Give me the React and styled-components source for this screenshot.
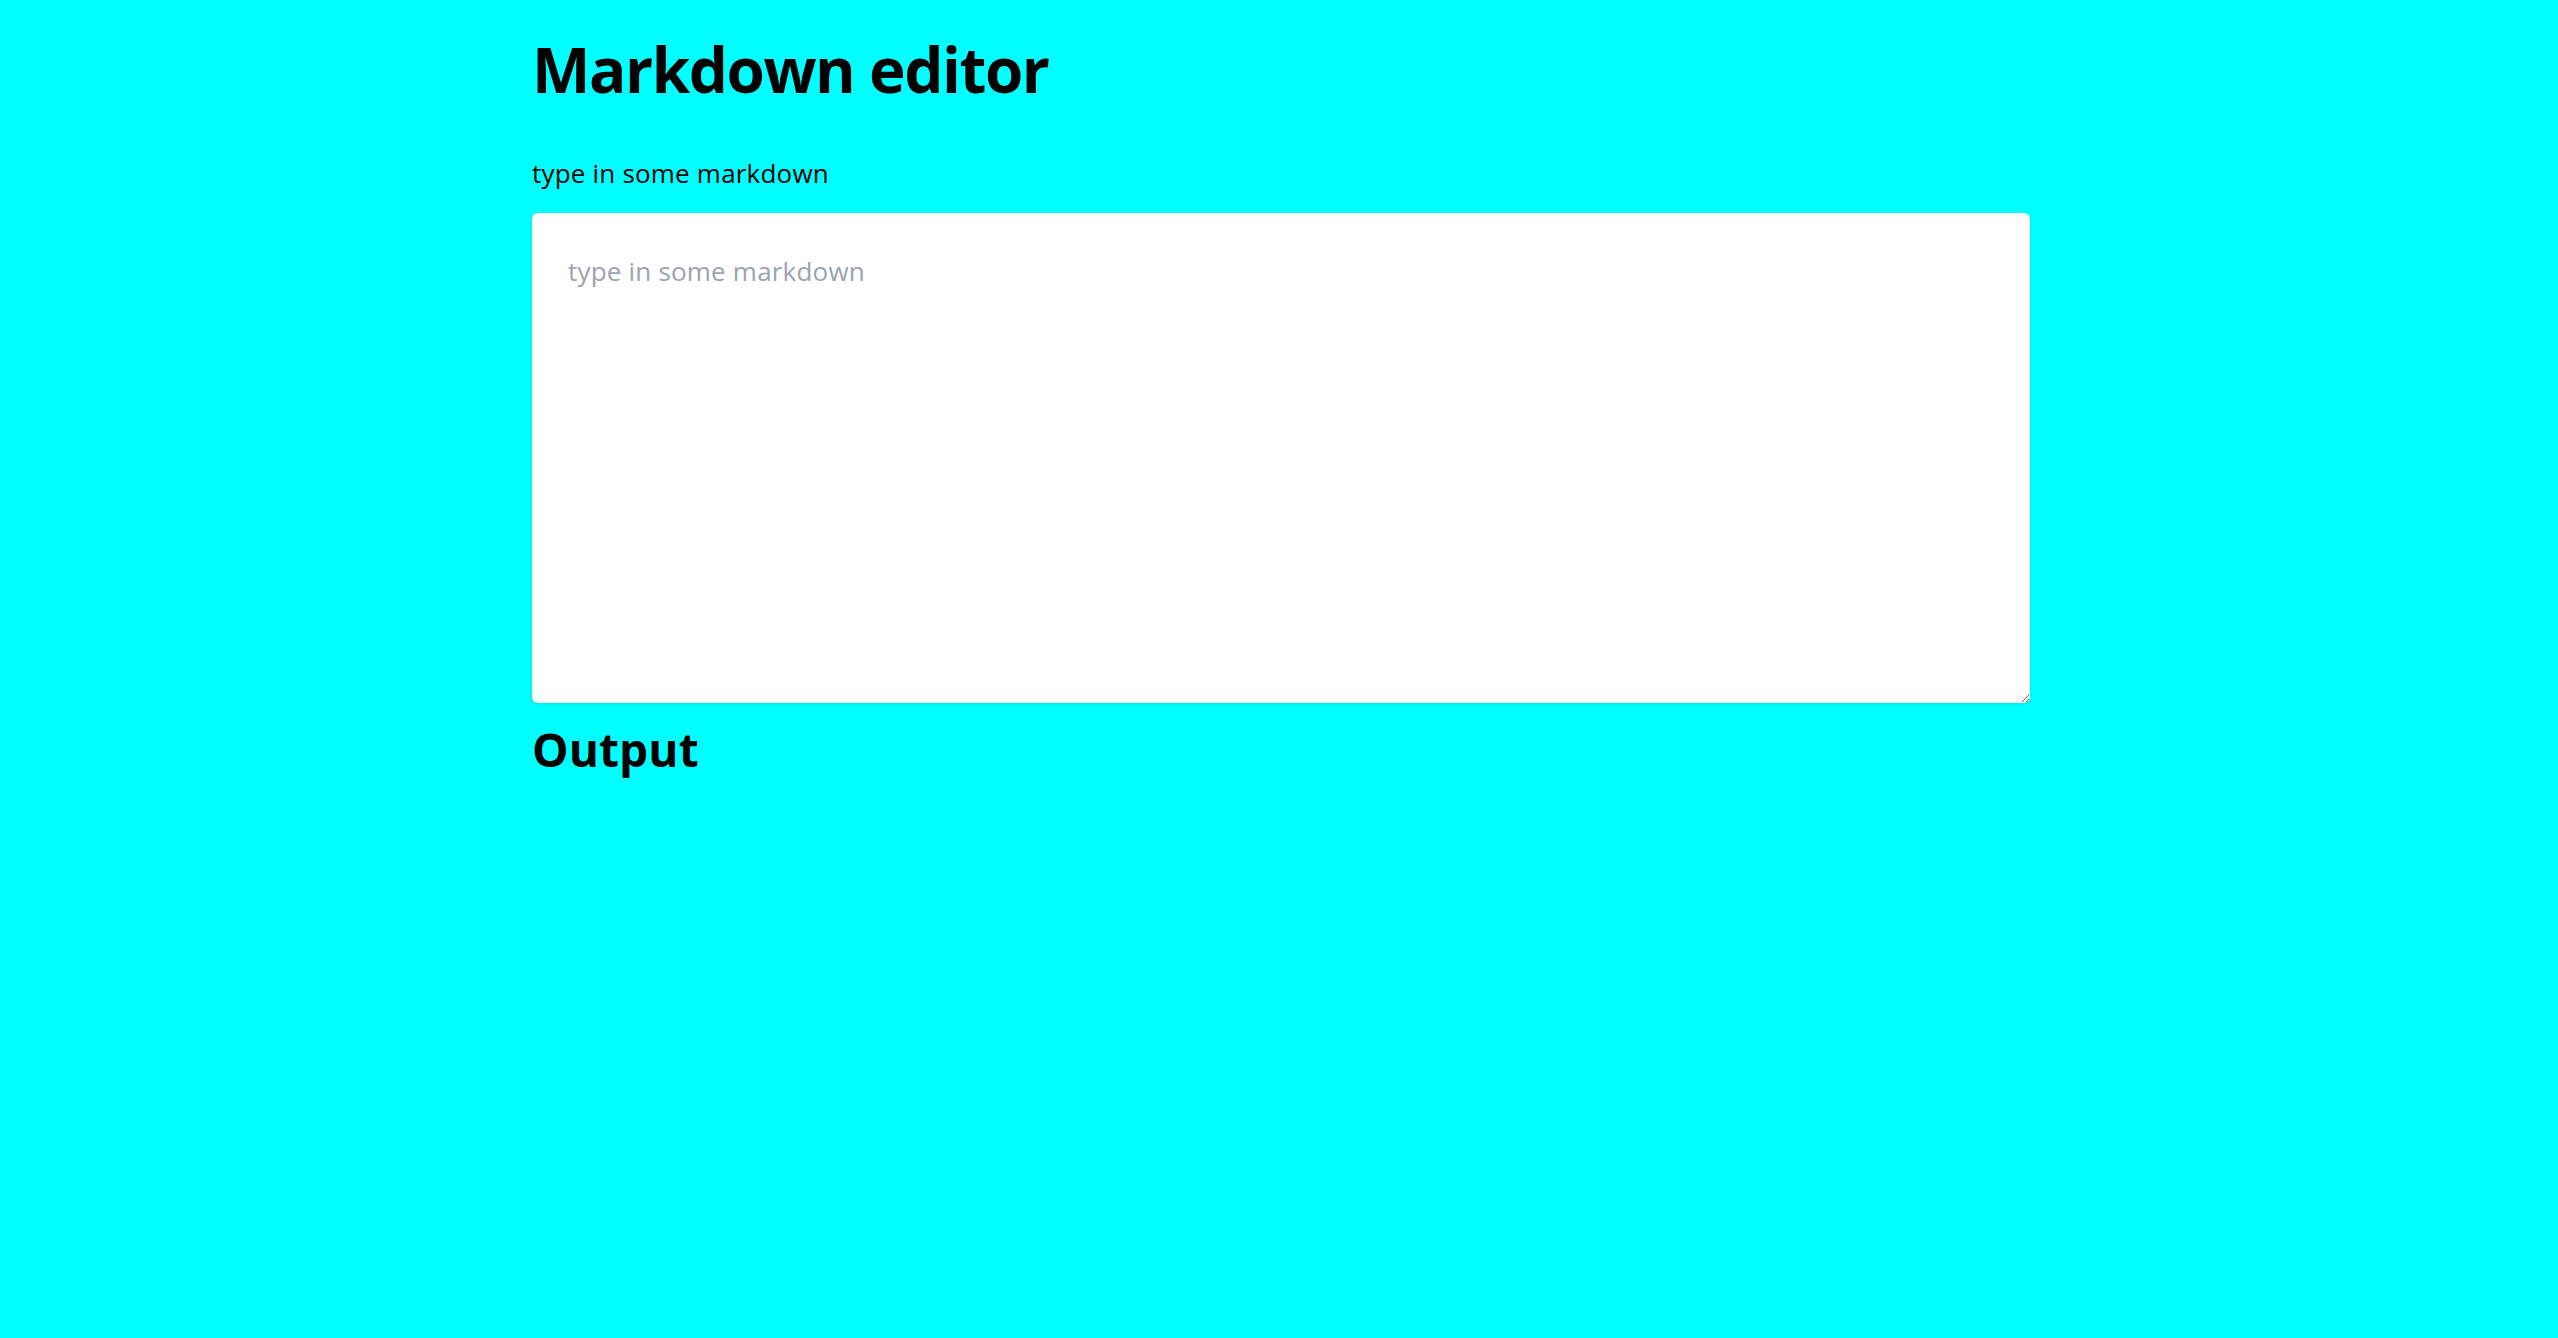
import styled, { createGlobalStyle } from "styled-components";

const GlobalStyle = createGlobalStyle`
    html, body {
        margin: 0;
        padding: 0;
        background: #00ffff;
        font-family: "Open Sans", "Noto Sans", sans-serif;
        color: #000;
    }
`

const Page = styled.div`
    min-height: 100vh;
    background: #00ffff;
    box-sizing: border-box;
    padding: 29px 0 0 4px;
`

const Main = styled.main`
    width: 1498px;
    margin: 0 auto;
    display: flex;
    flex-direction: column;
`

const Title = styled.h1`
    margin: 0;
    font-size: 62px;
    font-weight: 700;
    line-height: 80px;
    letter-spacing: -1.45px;
`

const Label = styled.label`
    margin-top: 44px;
    font-size: 26px;
    line-height: 40px;
    letter-spacing: 0.2px;
`

const Editor = styled.textarea`
    margin-top: 20px;
    height: 490px;
    box-sizing: border-box;
    padding: 38px 36px 32px;
    border: none;
    border-radius: 6px;
    background: #fff;
    box-shadow: 0 1px 3px rgba(0, 0, 0, 0.12);
    font-family: "Open Sans", "Noto Sans", sans-serif;
    font-size: 26px;
    line-height: 40px;
    letter-spacing: 0.2px;
    color: #111;
    outline: none;
    &::placeholder {
        color: #9ca3af;
    }
`

const Heading = styled.h2`
    margin: 16px 0 0;
    font-size: 46px;
    font-weight: 700;
    line-height: 60px;
    letter-spacing: 0.1px;
`

const App = () => {
    return <Page>
        <GlobalStyle />
        <Main>
            <Title>Markdown editor</Title>
            <Label htmlFor="markdown">type in some markdown</Label>
            <Editor id="markdown" placeholder="type in some markdown" />
            <Heading>Output</Heading>
        </Main>
    </Page>
}

export default App
